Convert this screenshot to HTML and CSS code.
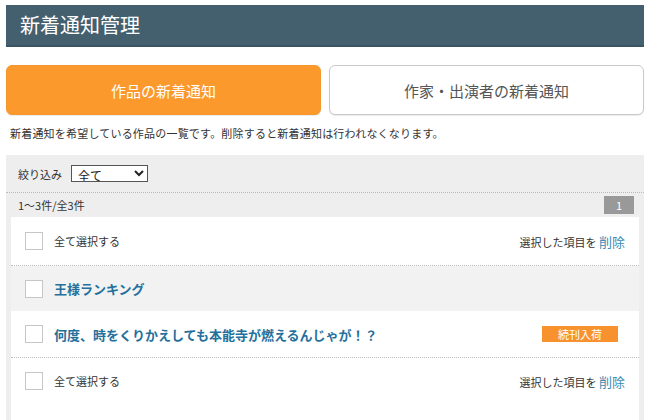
FILE: index.html
```html
<!DOCTYPE html>
<html lang="ja">
<head>
    <meta charset="UTF-8">
    <title>新着通知管理</title>
    <link rel="stylesheet" href="styles.css">
</head>
<body>
    <div class="page">
        <h1 class="page-title">新着通知管理</h1>
        <div class="tabs">
            <a class="tab tab-active" href="#">作品の新着通知</a>
            <a class="tab" href="#">作家・出演者の新着通知</a>
        </div>
        <p class="lead">新着通知を希望している作品の一覧です。削除すると新着通知は行われなくなります。</p>
        <div class="panel">
            <div class="filter">
                <label for="filter">絞り込み</label>
                <select id="filter">
                    <option>全て</option>
                    <option>続刊入荷</option>
                </select>
            </div>
            <div class="count-bar">
                <span>1〜3件/全3件</span>
                <span class="pager">1</span>
            </div>
            <div class="list">
                <div class="row row-line">
                    <span class="check"></span>
                    <span class="select-all">全て選択する</span>
                    <span class="delete">選択した項目を <a href="#">削除</a></span>
                </div>
                <div class="row row-gray">
                    <span class="check"></span>
                    <a class="title" href="#">王様ランキング</a>
                </div>
                <div class="row row-line">
                    <span class="check"></span>
                    <a class="title" href="#">何度、時をくりかえしても本能寺が燃えるんじゃが！？</a>
                    <span class="badge">続刊入荷</span>
                </div>
                <div class="row">
                    <span class="check"></span>
                    <span class="select-all">全て選択する</span>
                    <span class="delete">選択した項目を <a href="#">削除</a></span>
                </div>
            </div>
        </div>
    </div>
</body>
</html>
```

FILE: styles.css
```css
body {
    margin: 0;
    font-family: "Noto Sans CJK JP", "Noto Sans", sans-serif;
    color: #333;
    background: #fff;
}
.page {
    padding: 5px 6px 0;
}
.page-title {
    margin: 0;
    height: 40px;
    line-height: 40px;
    padding-left: 14px;
    font-size: 20px;
    font-weight: normal;
    color: #fff;
    background: #44606f;
    border-bottom: 2px solid #3a5463;
}
.tabs {
    display: flex;
    gap: 8px;
    margin-top: 18px;
}
.tab {
    flex: 1;
    height: 50px;
    box-sizing: border-box;
    display: flex;
    align-items: center;
    justify-content: center;
    border-radius: 6px;
    font-size: 15px;
    text-decoration: none;
    color: #555;
    background: #fff;
    border: 1px solid #c9c9c9;
    box-shadow: 0 1px 1px rgba(0, 0, 0, 0.08);
}
.tab-active {
    color: #fff;
    background: #fb992d;
    border-color: #f5962e;
}
.lead {
    margin: 0;
    padding: 10px 4px 14px;
    font-size: 11px;
    letter-spacing: 0.2px;
    line-height: 16px;
}
.panel {
    background: #eee;
    padding-bottom: 20px;
}
.filter {
    display: flex;
    align-items: center;
    gap: 9px;
    height: 37px;
    padding-left: 12px;
    font-size: 11px;
    border-bottom: 1px dotted #bbb;
}
.filter select {
    width: 77px;
    height: 17px;
    padding: 0 0 0 2px;
    font-family: inherit;
    font-size: 12px;
    color: #222;
    background: #fff;
    border: 1px solid #555;
    border-radius: 0;
}
.count-bar {
    display: flex;
    align-items: center;
    justify-content: space-between;
    height: 24px;
    padding: 0 10px 0 12px;
    font-size: 11px;
}
.pager {
    width: 30px;
    height: 18px;
    line-height: 18px;
    text-align: center;
    color: #fff;
    background: #999;
}
.list {
    margin: 0 5px;
    background: #fff;
    min-height: 220px;
}
.row {
    display: flex;
    align-items: center;
    height: 46px;
    padding: 0 14px;
}
.row-line {
    border-bottom: 1px dotted #bbb;
}
.list .row:first-child {
    height: 48px;
}
.row-gray {
    height: 45px;
    background: #f2f2f2;
}
.check {
    width: 16px;
    height: 16px;
    flex: none;
    border: 1px solid #c6c6c6;
    background: #fff;
    margin-right: 11px;
}
.select-all {
    font-size: 11px;
}
.title {
    font-size: 13px;
    font-weight: bold;
    color: #24709c;
    text-decoration: none;
}
.delete {
    margin-left: auto;
    font-size: 11px;
}
.delete a {
    font-size: 13px;
    color: #3a8bb5;
    text-decoration: none;
}
.badge {
    margin-left: auto;
    margin-right: 7px;
    width: 76px;
    height: 16px;
    line-height: 16px;
    text-align: center;
    font-size: 11px;
    color: #fff;
    background: #f8922f;
}
```
